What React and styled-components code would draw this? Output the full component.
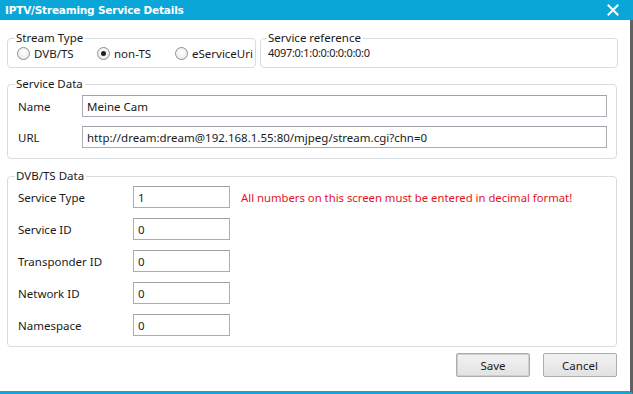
import React from "react";
import styled, { createGlobalStyle } from "styled-components";

const Global = createGlobalStyle`
  html, body { margin: 0; padding: 0; background: #fff; }
  body { font-family: "Noto Sans", "Open Sans", sans-serif; }
`;

const Window = styled.div`
  width: 633px;
  height: 394px;
  box-sizing: border-box;
  display: flex;
  flex-direction: column;
  background: #fff;
  overflow: hidden;
`;

const TitleBar = styled.div`
  height: 20px;
  flex: none;
  background: #0aa6d8;
  display: flex;
  align-items: center;
  justify-content: space-between;
  padding: 0 14px 0 5px;
  color: #fff;
  font-family: "DejaVu Sans", sans-serif;
  font-weight: bold;
  font-size: 10.5px;
  letter-spacing: -0.2px;
`;

const Body = styled.div`
  flex: 1;
  display: flex;
  flex-direction: column;
  padding: 11px 13px 0 7px;
  border-right: 3px solid #5f6163;
  border-bottom: 3px solid #16a5d3;
  font-size: 11.5px;
  color: #1a1a1a;
`;

const TopRow = styled.div`
  display: grid;
  grid-template-columns: 249px 358px;
  gap: 4px;
`;

const Group = styled.fieldset`
  margin: ${(p) => p.$mt || 0}px 0 0 0;
  border: 1px solid #d8dcdf;
  border-radius: 4px;
  padding: ${(p) => p.$pad};
  min-width: 0;
`;

const Legend = styled.legend`
  padding: 0 2px 0 1px;
  margin-left: ${(p) => p.$ml}px;
  line-height: 14px;
  font-size: 11.5px;
  color: #1a1a1a;
`;

const RadioRow = styled.div`
  display: flex;
  align-items: center;
  height: 14px;
`;

const RadioItem = styled.label`
  display: flex;
  align-items: center;
  gap: 4px;
  width: ${(p) => p.$w}px;
  flex: none;
`;

const RadioCircle = styled.span`
  width: 11px;
  height: 11px;
  border-radius: 50%;
  border: 1px solid #8e8f8f;
  background: radial-gradient(circle at 50% 40%, #ffffff 0%, #eceded 70%, #d8d9da 100%);
  display: flex;
  align-items: center;
  justify-content: center;
  &::after {
    content: "";
    width: 5px;
    height: 5px;
    border-radius: 50%;
    background: ${(p) => (p.$checked ? "#222" : "transparent")};
  }
`;

const RefValue = styled.div`
  height: 14px;
  line-height: 14px;
  padding-left: 1px;
  font-size: 11px;
  letter-spacing: -0.3px;
`;

const FormRows = styled.div`
  display: flex;
  flex-direction: column;
  gap: ${(p) => p.$gap}px;
`;

const FieldRow = styled.div`
  display: grid;
  grid-template-columns: ${(p) => p.$label}px ${(p) => p.$input};
  align-items: center;
`;

const Label = styled.span`
  padding-left: 1px;
`;

const TextBox = styled.div`
  height: 22px;
  box-sizing: border-box;
  border: 1px solid #abadb3;
  border-top-color: #a0a3a8;
  background: #fff;
  display: flex;
  align-items: center;
  padding-left: 4px;
  white-space: nowrap;
  overflow: hidden;
  font-size: 11.5px;
`;

const Hint = styled.span`
  color: #e3141f;
  padding-left: 11px;
  white-space: nowrap;
  font-size: 11.3px;
`;

const Buttons = styled.div`
  display: flex;
  justify-content: flex-end;
  gap: 13px;
  margin-top: 6px;
`;

const Button = styled.button`
  width: 74px;
  height: 24px;
  border: 1px solid #acacac;
  border-radius: 2px;
  background: linear-gradient(#f2f2f2, #e2e2e2);
  font-family: inherit;
  font-size: 11.5px;
  color: #1a1a1a;
  padding: 0;
  box-shadow: ${(p) => (p.$default ? "inset 0 0 0 1px #cfcfcf" : "none")};
`;

const CloseIcon = () => (
  <svg width="12" height="12" viewBox="0 0 12 12">
    <path d="M1.5 1.5 L10.5 10.5 M10.5 1.5 L1.5 10.5" stroke="#fff" strokeWidth="2" strokeLinecap="square" />
  </svg>
);

const dvbRows = [
  ["Service Type", "1"],
  ["Service ID", "0"],
  ["Transponder ID", "0"],
  ["Network ID", "0"],
  ["Namespace", "0"],
];

export default function App() {
  return (
    <>
      <Global />
      <Window>
        <TitleBar>
          <span>IPTV/Streaming Service Details</span>
          <CloseIcon />
        </TitleBar>
        <Body>
          <TopRow>
            <Group $pad="1px 6px 7px 9px">
              <Legend $ml={-2}>Stream Type</Legend>
              <RadioRow>
                <RadioItem $w={80}>
                  <RadioCircle />
                  DVB/TS
                </RadioItem>
                <RadioItem $w={78}>
                  <RadioCircle $checked />
                  non-TS
                </RadioItem>
                <RadioItem $w={80}>
                  <RadioCircle />
                  eServiceUri
                </RadioItem>
              </RadioRow>
            </Group>
            <Group $pad="1px 6px 7px 6px">
              <Legend $ml={0}>Service reference</Legend>
              <RefValue>4097:0:1:0:0:0:0:0:0:0</RefValue>
            </Group>
          </TopRow>

          <Group $mt={9} $pad="4px 9px 10px 9px">
            <Legend $ml={-2}>Service Data</Legend>
            <FormRows $gap={9}>
              <FieldRow $label={65} $input="1fr">
                <Label>Name</Label>
                <TextBox>Meine Cam</TextBox>
              </FieldRow>
              <FieldRow $label={65} $input="1fr">
                <Label>URL</Label>
                <TextBox>http://dream:dream@192.168.1.55:80/mjpeg/stream.cgi?chn=0</TextBox>
              </FieldRow>
            </FormRows>
          </Group>

          <Group $mt={10} $pad="3px 9px 10px 9px">
            <Legend $ml={-2}>DVB/TS Data</Legend>
            <FormRows $gap={10}>
              {dvbRows.map(([label, value], i) => (
                <FieldRow key={label} $label={116} $input="97px auto">
                  <Label>{label}</Label>
                  <TextBox>{value}</TextBox>
                  {i === 0 ? (
                    <Hint>All numbers on this screen must be entered in decimal format!</Hint>
                  ) : (
                    <span />
                  )}
                </FieldRow>
              ))}
            </FormRows>
          </Group>

          <Buttons>
            <Button $default>Save</Button>
            <Button>Cancel</Button>
          </Buttons>
        </Body>
      </Window>
    </>
  );
}
